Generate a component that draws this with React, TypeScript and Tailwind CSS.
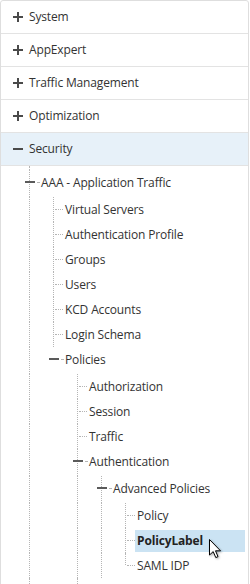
import React from 'react';

type Cell = 'none' | 'line' | 'tee' | 'elbow' | 'toggle' | 'toggleLine';

type Row = {
  label: string;
  cells: Cell[];
  expanded?: boolean;
  selected?: boolean;
};

const TOP = ['System', 'AppExpert', 'Traffic Management', 'Optimization'];

const ROWS: Row[] = [
  { label: 'AAA - Application Traffic', cells: ['toggleLine'], expanded: true },
  { label: 'Virtual Servers', cells: ['line', 'tee'] },
  { label: 'Authentication Profile', cells: ['line', 'tee'] },
  { label: 'Groups', cells: ['line', 'tee'] },
  { label: 'Users', cells: ['line', 'tee'] },
  { label: 'KCD Accounts', cells: ['line', 'tee'] },
  { label: 'Login Schema', cells: ['line', 'tee'] },
  { label: 'Policies', cells: ['line', 'toggle'], expanded: true },
  { label: 'Authorization', cells: ['line', 'none', 'tee'] },
  { label: 'Session', cells: ['line', 'none', 'tee'] },
  { label: 'Traffic', cells: ['line', 'none', 'tee'] },
  { label: 'Authentication', cells: ['line', 'none', 'toggleLine'], expanded: true },
  { label: 'Advanced Policies', cells: ['line', 'none', 'line', 'toggleLine'], expanded: true },
  { label: 'Policy', cells: ['line', 'none', 'line', 'line', 'tee'] },
  { label: 'PolicyLabel', cells: ['line', 'none', 'line', 'line', 'tee'], selected: true },
  { label: 'SAML IDP', cells: ['line', 'none', 'line', 'line', 'elbow'] },
];

const font = { fontFamily: '"Open Sans", "Noto Sans", sans-serif', letterSpacing: '-0.15px' };

export default function App() {
  return (
    <div className="w-[250px] h-[584px] overflow-hidden bg-white text-[12px] text-[#333]" style={font}>
      <div className="w-[249px] h-[600px] border border-[#dedede] rounded-t-[3px] bg-white">
        {TOP.map((t) => (
          <div key={t} className="h-[33px] flex items-center border-b border-[#e3e3e3] pl-[12px]">
            <PlusIcon />
            <span className="ml-[6px] leading-none">{t}</span>
          </div>
        ))}
        <div className="h-[33px] flex items-center border-b border-[#e3e3e3] pl-[12px] bg-[#e7f1f9]">
          <MinusIcon />
          <span className="ml-[6px] leading-none">Security</span>
        </div>

        {/* Tree */}
        <div className="flex flex-col">
          <div className="h-[4px] flex pl-[16px]">
            <GutterCell type="line" h={4} />
          </div>
          {ROWS.map((r) => (
            <TreeRow key={r.label} row={r} />
          ))}
          <div className="h-[10px] flex pl-[16px]">
            <GutterCell type="line" h={10} />
            <GutterCell type="none" h={10} />
            <GutterCell type="line" h={10} />
          </div>
        </div>
      </div>
    </div>
  );
}

function TreeRow({ row }: { row: Row }) {
  const h = row.expanded ? 27 : 25;
  return (
    <div className={`flex pl-[16px] ${row.expanded ? 'h-[27px]' : 'h-[25px]'}`}>
      {row.cells.map((c, i) => (
        <GutterCell key={i} type={c} h={h} />
      ))}
      <div className="h-[25px] flex items-center flex-1 pr-[1px]">
        {row.selected ? (
          <div className="relative flex items-center h-[22px] w-full bg-[#cbe3f3] -ml-[2px] pl-[2px] font-bold text-[#222]">
            {row.label}
            <Cursor />
          </div>
        ) : (
          <span className="whitespace-nowrap">{row.label}</span>
        )}
      </div>
    </div>
  );
}

function GutterCell({ type, h }: { type: Cell; h: number }) {
  return (
    <div className="relative w-[24px] shrink-0" style={{ height: h }}>
      {(type === 'line' || type === 'tee' || type === 'toggleLine') && (
        <div className="absolute left-[12px] top-0 bottom-0 border-l border-dotted border-[#b5b5b5]" />
      )}
      {type === 'elbow' && (
        <div className="absolute left-[12px] top-0 h-[12px] border-l border-dotted border-[#b5b5b5]" />
      )}
      {(type === 'tee' || type === 'elbow') && (
        <div className="absolute left-[14px] top-[12px] w-[8px] border-t border-dotted border-[#b5b5b5]" />
      )}
      {(type === 'toggle' || type === 'toggleLine') && (
        <>
          <div className="absolute left-[8px] top-[11px] w-[10px] h-[2px] bg-[#5a5a5a]" />
          <div className="absolute left-[20px] top-[12px] w-[2px] border-t border-dotted border-[#b5b5b5]" />
        </>
      )}
    </div>
  );
}

function PlusIcon() {
  return (
    <svg width="10" height="10" viewBox="0 0 10 10" className="shrink-0">
      <rect x="0" y="4" width="10" height="2" fill="#4a4a4a" />
      <rect x="4" y="0" width="2" height="10" fill="#4a4a4a" />
    </svg>
  );
}

function MinusIcon() {
  return (
    <svg width="10" height="10" viewBox="0 0 10 10" className="shrink-0">
      <rect x="0" y="4" width="10" height="2" fill="#4a4a4a" />
    </svg>
  );
}

function Cursor() {
  return (
    <svg
      width="14"
      height="21"
      viewBox="0 0 14 21"
      className="absolute left-[74px] top-[9px]"
      style={{ filter: 'drop-shadow(1px 1px 1px rgba(0,0,0,0.35))' }}
    >
      <path d="M0.5 0.5 L0.5 16 L4.2 12.6 L6.8 18.6 L9 17.6 L6.5 11.8 L11.5 11.8 Z" fill="#fff" stroke="#000" strokeWidth="1" strokeLinejoin="round" />
    </svg>
  );
}
